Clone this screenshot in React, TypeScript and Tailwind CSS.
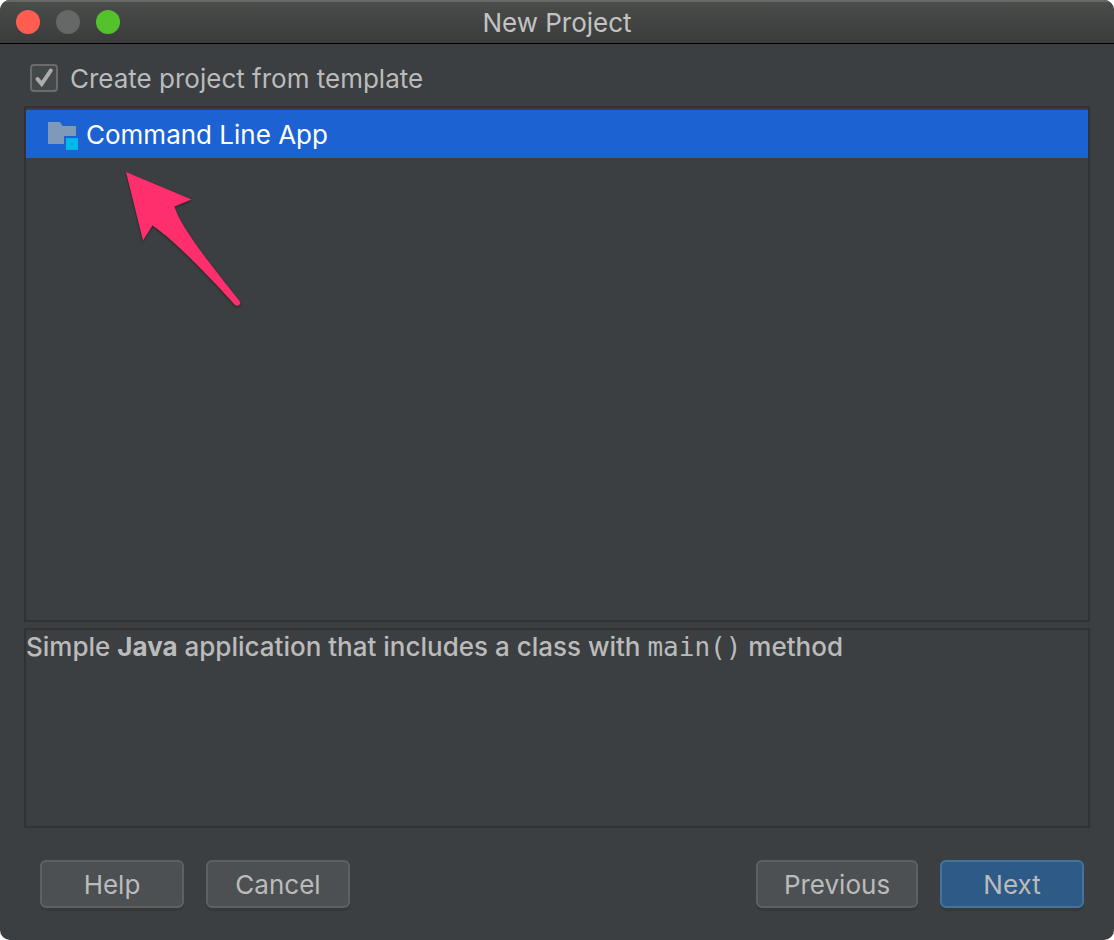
import { useState } from "react";
import type { ReactNode } from "react";

function FolderIcon() {
  return (
    <svg viewBox="0 0 32 32" className="size-8 shrink-0" aria-hidden="true">
      <path d="M2 4h10.500c1.500 0 1.900 .6 2.700 1.800l1.500 2.200H30v10H18v8H2z" fill="#7f99b9" />
      <path d="M20 20h12v12H20z" fill="#00b8e8" />
    </svg>
  );
}

function Pointer() {
  return (
    <svg
      viewBox="120 166 130 150"
      className="pointer-events-none absolute left-[94px] top-[58px] h-[150px] w-[130px] drop-shadow-[0_1px_1px_rgba(0,0,0,0.5)]"
      aria-hidden="true"
    >
      <path
        d="M126 172L191.500 199.500L174.500 206.500C180 226 210 264 239.500 301C242 304.500 237.500 307.500 234.500 304.500C213 281 179 244 152.500 225.500L143 240.500Z"
        fill="#ff2f6d"
      />
    </svg>
  );
}

type ActionProps = { children: ReactNode; primary?: boolean; wide?: boolean };

function Action({ children, primary = false, wide = false }: ActionProps) {
  const tone = primary ? "border-[#42759a] bg-[#2d5a87]" : "border-[#5e6161] bg-[#4c5052]";
  const width = wide ? "w-[162px]" : "w-36";
  return (
    <button
      type="button"
      className={`flex h-12 items-center justify-center rounded-md border-2 pt-0.5 shadow-[0_3px_0_#363839] ${tone} ${width}`}
    >
      {children}
    </button>
  );
}

export default function App() {
  const [fromTemplate, setFromTemplate] = useState(true);
  return (
    <div className="min-h-screen bg-white">
      <main className="flex min-h-screen flex-col overflow-hidden rounded-[10px] bg-[#3c3f41] font-['Inter',sans-serif] text-[26px] leading-8 text-[#bbbbbb]">
        <header className="relative flex h-11 items-center justify-center border-b border-black bg-linear-to-b from-[#4b4d4b] to-[#3a3b3b] shadow-[inset_0_2px_0_#676968]">
          <div className="absolute left-4 flex gap-4">
            <button type="button" aria-label="Close" className="size-6 rounded-full bg-[#ff5c52]" />
            <button type="button" aria-label="Minimize" className="size-6 rounded-full bg-[#666867]" />
            <button type="button" aria-label="Zoom" className="size-6 rounded-full bg-[#54c22c]" />
          </div>
          <h1 className="pt-0.5 text-[#c2c3c2]">New Project</h1>
        </header>

        <div className="flex flex-1 flex-col px-6 pt-[18px] pb-8">
          <label className="flex h-8 w-fit items-center gap-3 pl-1.5">
            <span className="grid size-7 shrink-0">
              <input
                type="checkbox"
                checked={fromTemplate}
                onChange={(event) => setFromTemplate(event.target.checked)}
                className="col-start-1 row-start-1 size-7 appearance-none rounded-[4px] border-2 border-[#6b6b6b] bg-[#43494a]"
              />
              {fromTemplate && (
                <svg viewBox="0 0 28 28" className="pointer-events-none col-start-1 row-start-1 size-7" aria-hidden="true">
                  <path d="M7.500 15L11.700 20L20.800 6.500" fill="none" stroke="#acacac" strokeWidth="4" strokeLinecap="round" />
                </svg>
              )}
            </span>
            <span className="pt-0.5">Create project from template</span>
          </label>

          <div className="relative mt-3 flex-1 border-2 border-[#323232] pt-0.5">
            <ul role="listbox" aria-label="Templates">
              <li
                role="option"
                aria-selected="true"
                className="flex h-12 items-center gap-2 bg-[#1d62d2] pl-5 text-white"
              >
                <FolderIcon />
                <span className="pt-0.5">Command Line App</span>
              </li>
            </ul>
            <Pointer />
          </div>

          <p className="mt-1.5 h-[200px] border-2 border-[#323232] pt-px font-medium">
            Simple <b>Java</b> application that includes a class with{" "}
            <code className="font-['DejaVu_Sans_Mono',monospace]">main()</code> method
          </p>

          <footer className="mt-8 flex justify-between pr-1.5 pl-4">
            <div className="flex gap-[22px]">
              <Action>Help</Action>
              <Action>Cancel</Action>
            </div>
            <div className="flex gap-[22px]">
              <Action wide>Previous</Action>
              <Action primary>Next</Action>
            </div>
          </footer>
        </div>
      </main>
    </div>
  );
}
